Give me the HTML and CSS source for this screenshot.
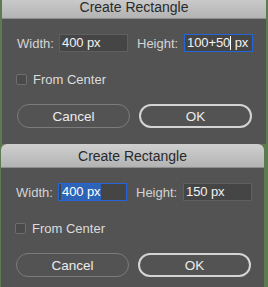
FILE: index.html
```html
<!DOCTYPE html>
<html lang="en">
<head>
  <meta charset="UTF-8" />
  <title>Create Rectangle</title>
  <link rel="stylesheet" href="styles.css">
</head>
<body>
  <div class="dialog dialog-top">
    <div class="title">Create Rectangle</div>
    <div class="panel">
      <div class="fields">
        <span class="label label-w">Width:</span>
        <div class="field">400 px</div>
        <span class="label label-h">Height:</span>
        <div class="field focused">100+50<span class="caret"></span> px</div>
      </div>
      <label class="check"><span class="box"></span>From Center</label>
      <div class="buttons">
        <button class="btn">Cancel</button>
        <button class="btn btn-ok">OK</button>
      </div>
    </div>
  </div>

  <div class="dialog dialog-bottom">
    <div class="title">Create Rectangle</div>
    <div class="panel">
      <div class="fields">
        <span class="label label-w">Width:</span>
        <div class="field focused"><span class="selected">400 px</span></div>
        <span class="label label-h">Height:</span>
        <div class="field">150 px</div>
      </div>
      <label class="check"><span class="box"></span>From Center</label>
      <div class="buttons">
        <button class="btn">Cancel</button>
        <button class="btn btn-ok">OK</button>
      </div>
    </div>
  </div>
</body>
</html>
```

FILE: styles.css
```css
* {
  box-sizing: border-box;
}

body {
  margin: 0;
  height: 287px;
  overflow: hidden;
  background: #5d7a50;
  font-family: 'Liberation Sans', Arial, sans-serif;
  font-size: 13px;
  color: #dcdcdc;
}

.dialog {
  background: #535353;
}

.dialog-top {
  width: 264px;
  margin: -5px 0 0 2px;
}

.dialog-bottom {
  width: 263px;
  margin-left: 1px;
  border-radius: 6px 6px 0 0;
  overflow: hidden;
}

.title {
  height: 24px;
  line-height: 24px;
  text-align: center;
  font-size: 14px;
  color: #2a2a2a;
  background: linear-gradient(#cfcfcf, #b3b3b3);
  border-bottom: 1px solid #8e8e8e;
}

.panel {
  height: 125px;
  padding: 15px 0 0 15px;
}

.fields {
  display: flex;
  align-items: center;
  height: 18px;
}

.label {
  color: #d4d4d4;
}

.label-w {
  width: 42px;
}

.label-h {
  width: 47px;
  margin-left: 9px;
}

.field {
  width: 69px;
  height: 18px;
  padding-left: 2px;
  line-height: 16px;
  font-size: 13px;
  letter-spacing: -0.1px;
  color: #f2f2f2;
  background: #454545;
  border: 1px solid #5f5f5f;
  white-space: nowrap;
}

.field.focused {
  border-color: #2566d6;
}

.caret {
  display: inline-block;
  width: 1px;
  height: 14px;
  vertical-align: -3px;
  background: #ffffff;
}

.selected {
  display: inline-block;
  height: 16px;
  padding: 0 1px;
  background: #2d64b8;
  color: #ffffff;
}

.check {
  display: flex;
  align-items: center;
  gap: 6px;
  height: 12px;
  margin: 21px 0 0 -1px;
  color: #dcdcdc;
}

.box {
  width: 11px;
  height: 11px;
  border: 1px solid #6e6e6e;
  border-radius: 2px;
  background: #4a4a4a;
}

.buttons {
  display: flex;
  gap: 9px;
  margin-top: 19px;
}

.btn {
  width: 113px;
  height: 24px;
  padding: 0;
  border: 1px solid #7c7c7c;
  border-radius: 12px;
  background: transparent;
  font-family: inherit;
  font-size: 13.5px;
  color: #ececec;
}

.btn-ok {
  border: 2px solid #d4d4d4;
}
```
